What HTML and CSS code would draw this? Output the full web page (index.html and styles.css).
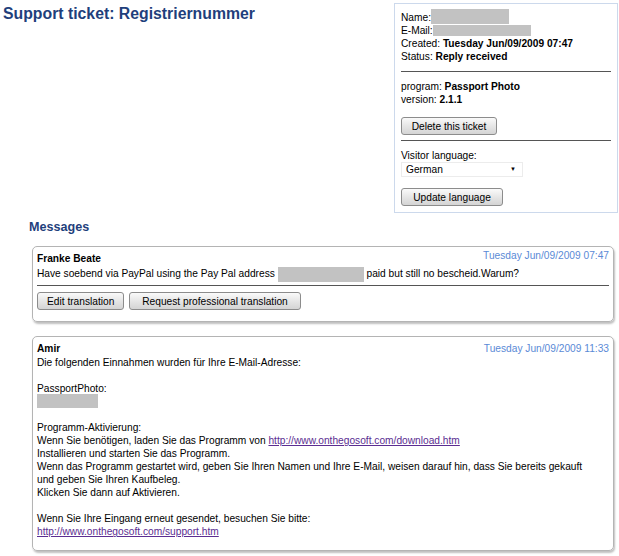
FILE: index.html
```html
<!DOCTYPE html>
<html lang="de">
<head>
  <meta charset="UTF-8">
  <title>Support ticket: Registriernummer</title>
  <link rel="stylesheet" href="styles.css">
</head>
<body>

  <!-- Header row: title + ticket info -->
  <div class="top">
    <h1>Support ticket: Registriernummer</h1>

    <div class="panel">
      <div class="info">
        <div>Name:<span class="blank blank-name"></span></div>
        <div>E-Mail:<span class="blank blank-mail"></span></div>
        <div>Created: <b>Tuesday Jun/09/2009 07:47</b></div>
        <div>Status: <b>Reply received</b></div>
      </div>
      <hr>
      <div class="info">
        <div>program: <b>Passport Photo</b></div>
        <div>version: <b>2.1.1</b></div>
      </div>
      <button class="button btn-delete">Delete this ticket</button>
      <hr class="hr-lang">
      <div class="info">Visitor language:</div>
      <div class="select">German<span class="arrow">&#9660;</span></div>
      <button class="button btn-update">Update language</button>
    </div>
  </div>

  <!-- Messages -->
  <div class="messages">
    <h2>Messages</h2>

    <div class="msg">
      <div class="msg-head">
        <span class="author">Franke Beate</span>
        <span class="date date-up">Tuesday Jun/09/2009 07:47</span>
      </div>
      <div class="msg-body">Have soebend via PayPal using the Pay Pal address <span class="blank blank-addr"></span> paid but still no bescheid.Warum?</div>
      <hr class="msg-line">
      <div class="msg-actions">
        <button class="button">Edit translation</button>
        <button class="button btn-request">Request professional translation</button>
      </div>
    </div>

    <div class="msg">
      <div class="msg-head">
        <span class="author">Amir</span>
        <span class="date">Tuesday Jun/09/2009 11:33</span>
      </div>
      <div class="msg-body msg-long">
        Die folgenden Einnahmen wurden für Ihre E-Mail-Adresse:<br>
        <br>
        PassportPhoto:<br>
        <span class="blank blank-code"></span><br>
        <br>
        Programm-Aktivierung:<br>
        Wenn Sie benötigen, laden Sie das Programm von <a href="#">http://www.onthegosoft.com/download.htm</a><br>
        Installieren und starten Sie das Programm.<br>
        Wenn das Programm gestartet wird, geben Sie Ihren Namen und Ihre E-Mail, weisen darauf hin, dass Sie bereits gekauft und geben Sie Ihren Kaufbeleg.<br>
        Klicken Sie dann auf Aktivieren.<br>
        <br>
        Wenn Sie Ihre Eingang erneut gesendet, besuchen Sie bitte:<br>
        <a href="#">http://www.onthegosoft.com/support.htm</a>
      </div>
    </div>
  </div>

</body>
</html>
```

FILE: styles.css
```css
body {
  margin: 0;
  padding: 3px 1px 0 3px;
  background-color: #fff;
  color: #000;
  font-family: "Liberation Sans", Arial, sans-serif;
  font-size: 10.2px;
  line-height: 13px;
}
.top {
  display: flex;
  justify-content: space-between;
  align-items: flex-start;
}
h1 {
  margin: 2px 0 0 0;
  font-size: 15.8px;
  line-height: 18px;
  color: #1f3f7c;
}
/* Ticket info panel */
.panel {
  width: 210px;
  border: 1px solid #ccd9ec;
  padding: 7px 6px 6px 6px;
}
.panel hr {
  border: none;
  border-top: 1px solid #555;
  margin: 8px 0 8px 0;
}
.panel .hr-lang {
  margin: 5px 0 8px 0;
}
.blank {
  display: inline-block;
  background-color: #c2c2c2;
  vertical-align: middle;
}
.blank-name {
  width: 78px;
  height: 15px;
  margin-top: -3px;
}
.blank-mail {
  width: 98px;
  height: 11px;
  margin-top: -2px;
}
.button {
  font-family: "Liberation Sans", Arial, sans-serif;
  font-size: 10.2px;
  color: #000;
  height: 18px;
  padding: 0 9px;
  border: 1px solid #8c8c8c;
  border-radius: 3px;
  background: linear-gradient(#fafafa, #e6e6e6 50%, #d4d4d4);
  cursor: pointer;
}
.btn-delete {
  margin-top: 11px;
  width: 96px;
}
.select {
  position: relative;
  width: 112px;
  height: 13px;
  margin-top: 0;
  padding: 0 4px;
  border: 1px solid #ececec;
  line-height: 13px;
}
.arrow {
  position: absolute;
  right: 6px;
  top: 0;
  font-size: 6px;
}
.btn-update {
  margin-top: 11px;
  width: 102px;
}
/* Messages */
.messages {
  padding: 0 4px 0 26px;
}
h2 {
  margin: 6px 0 11px 0;
  font-size: 12.6px;
  line-height: 16px;
  color: #1f3f7c;
}
.msg {
  margin: 0 0 14px 3px;
  padding: 4px 4px 6px 4px;
  border: 1px solid #b4b4b4;
  border-radius: 5px;
  box-shadow: 1px 2px 2px rgba(0, 0, 0, 0.25);
}
.msg-head {
  display: flex;
  justify-content: space-between;
  line-height: 15px;
}
.author {
  font-weight: bold;
}
.date {
  color: #5a8ad6;
}
.date-up {
  margin-top: -3px;
}
.msg-body {
  margin-top: 1px;
}
.blank-addr {
  width: 86px;
  height: 15px;
  margin: -2px 0;
}
.blank-code {
  width: 61px;
  height: 14px;
  vertical-align: top;
  margin: -1px 0 -2px 0;
}
.msg-line {
  border: none;
  border-top: 1px solid #555;
  margin: 5px 0 6px 0;
}
.msg-actions {
  margin-bottom: 5px;
}
.msg-actions .button {
  margin-right: 2px;
}
.btn-request {
  padding: 0 12px;
}
.msg-long {
  margin-top: 0;
  padding: 0 20px 6px 0;
}
a {
  color: #5b2d91;
}
```
